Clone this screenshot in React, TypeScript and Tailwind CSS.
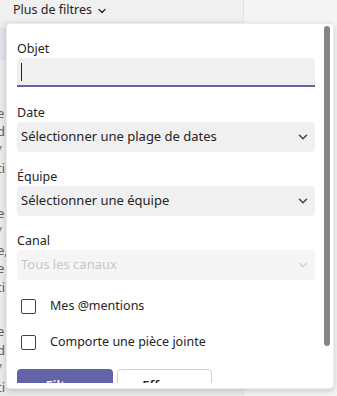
import { ChevronDown } from 'lucide-react';

const font = { fontFamily: '"Noto Sans", "Open Sans", Arial, sans-serif' };

const fragments = [
  ['e', 'd', '/', 'ti'],
  ['e', '/', 'e,', 'e', 'ti'],
  ['e', 'd', '/', 'ti'],
];

const SelectField = ({ label, value, disabled }: { label: string; value: string; disabled?: boolean }) => (
  <div className="flex flex-col">
    <label className="h-4 text-[12.5px] leading-4 text-[#242424] mb-px">{label}</label>
    <div
      className={`h-[30px] rounded flex items-center justify-between pl-1 pr-[5px] ${
        disabled ? 'bg-[#f5f5f5] text-[#c7c7c7]' : 'bg-[#f0f0f0] text-[#242424]'
      }`}
    >
      <span className="text-[13px]">{value}</span>
      <ChevronDown size={14} strokeWidth={2.5} className={disabled ? 'text-[#d1d1d1]' : 'text-[#424242]'} />
    </div>
  </div>
);

const Check = ({ label }: { label: string }) => (
  <div className="flex items-center h-9 pl-1">
    <span className="w-[15px] h-[15px] border border-[#424242] rounded-[2px] bg-white" />
    <span className="ml-[14px] text-[12.5px] text-[#242424]">{label}</span>
  </div>
);

export default function App() {
  return (
    <div className="relative w-[337px] h-[396px] overflow-hidden bg-[#f5f5f5]" style={font}>
      <div className="flex h-full">
        <div className="w-[244px] h-full bg-[#ebebeb] border-r border-[#e3e3e3] flex flex-col">
          <div className="h-[23px] flex items-center pl-[13px] text-[12.5px] text-[#242424] bg-[#f0f0f0]">
            Plus de filtres
            <ChevronDown size={12} strokeWidth={2.5} className="ml-[4px] mt-px" />
          </div>
          <div className="h-[34px] mt-[7px] w-[8px] bg-[#e1e1ef]" />
          <div className="flex flex-col mt-[44px] gap-[26px] -ml-[3px] text-[13px] leading-[18.5px] text-[#616161]">
            {fragments.map((lines, i) => (
              <div key={i} className="flex flex-col">
                {lines.map((l, j) => (
                  <span key={j}>{l}</span>
                ))}
              </div>
            ))}
          </div>
        </div>
      </div>

      <div className="absolute left-[6px] top-[23px] w-[328px] h-[366px] bg-white rounded border border-[#ececec] shadow-[0_2px_6px_rgba(0,0,0,0.18)] overflow-hidden">
        <div className="h-[359px] overflow-hidden pl-[10px] pr-[18px] pt-[17px] flex flex-col">
          <div className="flex flex-col">
            <label className="h-4 text-[12.5px] leading-4 text-[#242424] mb-px">Objet</label>
            <div className="h-[29px] rounded-t bg-[#f0f0f0] border-b-2 border-[#6264a7] flex items-center pl-1">
              <span className="w-px h-[18px] bg-[#242424]" />
            </div>
          </div>
          <div className="flex flex-col gap-[17px] mt-[18px]">
            <SelectField label="Date" value="Sélectionner une plage de dates" />
            <SelectField label="Équipe" value="Sélectionner une équipe" />
            <SelectField label="Canal" value="Tous les canaux" disabled />
          </div>
          <div className="flex flex-col mt-[8px]">
            <Check label="Mes @mentions" />
            <Check label="Comporte une pièce jointe" />
          </div>
          <div className="flex gap-1 mt-[9px] shrink-0">
            <button className="w-[96px] h-8 rounded bg-[#6264a7] text-white text-[13px] font-semibold pt-[2px]">
              Filtrer
            </button>
            <button className="w-[95px] h-8 rounded border border-[#d1d1d1] bg-white text-[#242424] text-[13px] font-semibold pt-[1px]">
              Effacer
            </button>
          </div>
        </div>
        <div className="absolute right-[3px] top-[2px] w-[6px] h-[320px] rounded-full bg-[#858585]" />
      </div>
    </div>
  );
}
